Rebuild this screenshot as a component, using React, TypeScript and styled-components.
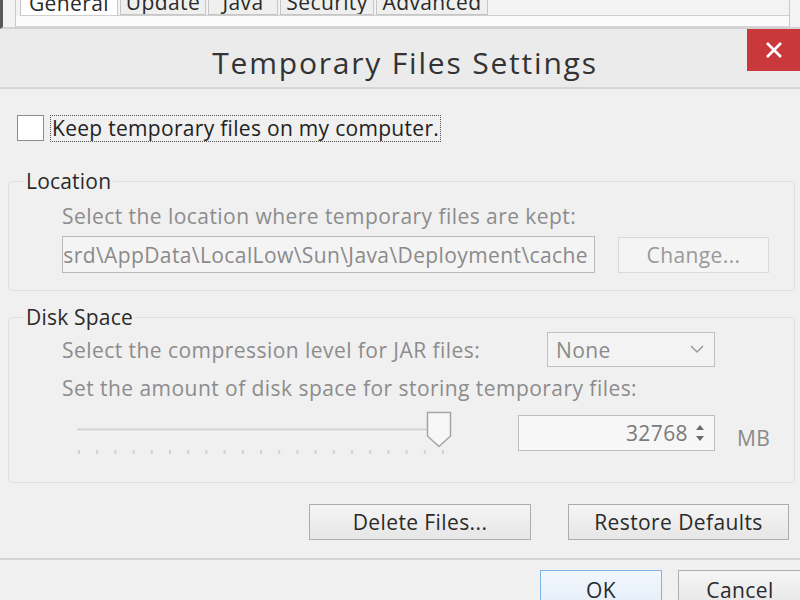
import React from "react";
import styled, { createGlobalStyle } from "styled-components";

const Global = createGlobalStyle`
  html, body { margin: 0; padding: 0; background: #f0f0f0; }
  body { font-family: "Open Sans", "Noto Sans", sans-serif; overflow: hidden; }
  * { box-sizing: border-box; }
`;

const Page = styled.div`
  width: 800px;
  height: 600px;
  display: flex;
  flex-direction: column;
  overflow: hidden;
  background: #f0f0f0;
  position: relative;
  & > * { flex-shrink: 0; }
`;

const ParentStrip = styled.div`
  height: 29px;
  background: #f3f3f3;
  display: flex;
  padding-left: 5px;
  border-left: 3px solid #5a5a5a;
  border-bottom: 2px solid #d2d2d2;
  overflow: hidden;
`;

const ParentPanel = styled.div`
  margin-left: 7px;
  width: 775px;
  height: 27px;
  border-left: 1px solid #c9c9c9;
  border-right: 1px solid #c9c9c9;
  display: flex;
  flex-direction: column;
`;

const Tabs = styled.div`
  display: flex;
  height: 16px;
  margin-left: 4px;
  align-items: flex-end;
  border-bottom: 1px solid #cfcfcf;
`;

const Tab = styled.div<{ $active?: boolean; $w: number }>`
  width: ${(p) => p.$w}px;
  height: ${(p) => (p.$active ? 17 : 16)}px;
  margin-right: 2px;
  background: ${(p) => (p.$active ? "#ffffff" : "#efefef")};
  border: 1px solid #c6c6c6;
  border-top: none;
  border-bottom: ${(p) => (p.$active ? "none" : "1px solid #c6c6c6")};
  font-size: 21px;
  line-height: 10px;
  color: #2a2a2a;
  display: flex;
  justify-content: center;
  align-items: flex-end;
  overflow: hidden;
  white-space: nowrap;
  letter-spacing: 0.4px;
`;

const TabText = styled.span`
  display: block;
  transform: translateY(-7px);
`;

const PanelBody = styled.div`
  flex: 1;
  background: #fbfbfb;
  border-bottom: 1px solid #d8d8d8;
`;

const TitleBar = styled.div`
  height: 60px;
  background: #ebebeb;
  border-bottom: 2px solid #d6d6d6;
  display: flex;
  align-items: center;
  justify-content: center;
  padding: 8px 0 0 10px;
  position: relative;
`;

const Title = styled.div`
  font-size: 30px;
  color: #333333;
  letter-spacing: 1.8px;
`;

const CloseButton = styled.div`
  position: absolute;
  top: 0;
  right: 0;
  width: 53px;
  height: 42px;
  background: #c9393c;
  display: flex;
  align-items: center;
  justify-content: center;
`;

const Content = styled.div`
  display: flex;
  flex-direction: column;
  padding: 26px 5px 0 8px;
  & > * { flex-shrink: 0; }
`;

const CheckRow = styled.div`
  display: flex;
  align-items: center;
  padding-left: 9px;
  height: 26px;
`;

const Box = styled.div`
  width: 27px;
  height: 26px;
  background: #ffffff;
  border: 1px solid #8d8d8d;
  margin-right: 7px;
`;

const FocusLabel = styled.span`
  font-size: 21px;
  color: #222;
  letter-spacing: 0.3px;
  padding: 0 1px;
  outline: 1px dotted #555;
  line-height: 25px;
`;

const Group = styled.fieldset<{ $height: number }>`
  margin: 0;
  padding: 0;
  border: 1px solid #e0e0e0;
  border-radius: 3px;
  height: ${(p) => p.$height}px;
  min-width: 0;
`;

const Legend = styled.legend`
  margin-left: 15px;
  padding: 0 2px;
  font-size: 21px;
  color: #2a2a2a;
  letter-spacing: 0.2px;
  line-height: 24px;
`;

const GroupBody = styled.div<{ $pt: number }>`
  display: flex;
  flex-direction: column;
  padding-left: 53px;
  padding-top: ${(p) => p.$pt}px;
`;

const Hint = styled.div<{ $w?: number; $mt?: number }>`
  font-size: 21px;
  color: #8c8c8c;
  letter-spacing: 0.45px;
  line-height: 26px;
  white-space: nowrap;
  width: ${(p) => (p.$w ? `${p.$w}px` : "auto")};
  margin-top: ${(p) => p.$mt ?? 0}px;
`;

const Row = styled.div<{ $gap?: number; $mt?: number; $align?: string }>`
  display: flex;
  align-items: ${(p) => p.$align ?? "center"};
  gap: ${(p) => p.$gap ?? 0}px;
  margin-top: ${(p) => p.$mt ?? 0}px;
`;

const PathField = styled.div`
  width: 533px;
  height: 37px;
  border: 1px solid #b9b9b9;
  background: #f4f4f4;
  font-size: 21px;
  color: #8a8a8a;
  letter-spacing: 0.4px;
  display: flex;
  align-items: center;
  justify-content: flex-end;
  padding-right: 6px;
  overflow: hidden;
  white-space: nowrap;
`;

const Button = styled.div<{ $w: number; $disabled?: boolean; $default?: boolean }>`
  width: ${(p) => p.$w}px;
  height: 36px;
  border: 1px solid ${(p) => (p.$default ? "#7eb4ea" : p.$disabled ? "#dadada" : "#adadad")};
  background: ${(p) =>
    p.$disabled ? "#f4f4f4" : p.$default ? "linear-gradient(#f2f7fc, #e3eef9)" : "linear-gradient(#f5f5f5, #e6e6e6)"};
  font-size: 21px;
  letter-spacing: 0.4px;
  color: ${(p) => (p.$disabled ? "#9a9a9a" : "#2a2a2a")};
  display: flex;
  align-items: center;
  justify-content: center;
  flex-shrink: 0;
`;

const Select = styled.div`
  width: 168px;
  height: 35px;
  border: 1px solid #c0c0c0;
  background: #f3f3f3;
  display: flex;
  align-items: center;
  justify-content: space-between;
  padding: 0 10px 0 8px;
  font-size: 21px;
  color: #8a8a8a;
  letter-spacing: 0.4px;
`;

const SliderBox = styled.div`
  margin-left: 12px;
  width: 444px;
  height: 46px;
`;

const Spinner = styled.div`
  width: 197px;
  height: 36px;
  margin-top: 4px;
  border: 1px solid #bdbdbd;
  background: #f7f7f7;
  display: flex;
  align-items: center;
  justify-content: flex-end;
  padding-right: 8px;
  gap: 6px;
  font-size: 21px;
  color: #7a7a7a;
  letter-spacing: 0.4px;
`;

const Unit = styled.span`
  font-size: 21px;
  color: #8a8a8a;
  margin-left: 22px;
  margin-top: 13px;
  letter-spacing: 0.3px;
`;

const Spacer = styled.div<{ $h: number }>`
  height: ${(p) => p.$h}px;
  flex-shrink: 0;
`;

const ActionRow = styled.div`
  display: flex;
  justify-content: flex-end;
  gap: 37px;
  padding-right: 6px;
  margin-top: 21px;
`;

const Separator = styled.div`
  height: 2px;
  background: #d4d4d4;
  margin-top: 18px;
`;

const FooterRow = styled.div`
  display: flex;
  justify-content: flex-end;
  gap: 16px;
  margin-top: 10px;
  margin-right: -2px;
`;

const FooterButton = styled(Button)`
  height: 40px;
`;

const Slider = () => {
  const ticks = [];
  for (let i = 0; i < 21; i++) {
    const x = 4 + i * 18.2;
    ticks.push(<rect key={i} x={x} y={39} width={2} height={4} fill="#d2d2d2" />);
  }
  return (
    <svg width="385" height="46" viewBox="0 0 385 46">
      <rect x="3" y="17" width="360" height="3" fill="#dcdcdc" />
      <rect x="3" y="20" width="360" height="1" fill="#f8f8f8" />
      {ticks}
      <path d="M353.5 1.5 H376.5 V25 L365 35.5 L353.5 25 Z" fill="#f7f7f7" stroke="#a4a4a4" strokeWidth="1.5" />
    </svg>
  );
};

export default function App() {
  return (
    <Page>
      <Global />
      <ParentStrip>
        <ParentPanel>
          <Tabs>
            <Tab $active $w={98}><TabText>General</TabText></Tab>
            <Tab $w={86}><TabText>Update</TabText></Tab>
            <Tab $w={70}><TabText>Java</TabText></Tab>
            <Tab $w={94}><TabText>Security</TabText></Tab>
            <Tab $w={112}><TabText>Advanced</TabText></Tab>
          </Tabs>
          <PanelBody />
        </ParentPanel>
      </ParentStrip>
      <TitleBar>
        <Title>Temporary Files Settings</Title>
        <CloseButton>
          <svg width="20" height="18" viewBox="0 0 20 18">
            <path d="M3 2 L17 16 M17 2 L3 16" stroke="#fff" strokeWidth="2.6" />
          </svg>
        </CloseButton>
      </TitleBar>
      <Content>
        <CheckRow>
          <Box />
          <FocusLabel>Keep temporary files on my computer.</FocusLabel>
        </CheckRow>
        <Spacer $h={28} />
        <Group $height={122}>
          <Legend>Location</Legend>
          <GroupBody $pt={10}>
            <Hint>Select the location where temporary files are kept:</Hint>
            <Row $gap={23} $mt={7}>
              <PathField>srd\AppData\LocalLow\Sun\Java\Deployment\cache</PathField>
              <Button $w={151} $disabled>Change...</Button>
            </Row>
          </GroupBody>
        </Group>
        <Spacer $h={14} />
        <Group $height={178}>
          <Legend>Disk Space</Legend>
          <GroupBody $pt={3}>
            <Row>
              <Hint $w={485}>Select the compression level for JAR files:</Hint>
              <Select>
                <span>None</span>
                <svg width="14" height="9" viewBox="0 0 14 9">
                  <path d="M1 1 L7 7 L13 1" fill="none" stroke="#9a9a9a" strokeWidth="1.5" />
                </svg>
              </Select>
            </Row>
            <Hint $mt={8}>Set the amount of disk space for storing temporary files:</Hint>
            <Row $mt={10} $align="flex-start">
              <SliderBox>
                <Slider />
              </SliderBox>
              <Spinner>
                <span>32768</span>
                <svg width="12" height="26" viewBox="0 0 12 26">
                  <path d="M2 10 L6 5 L10 10 Z" fill="#6a6a6a" />
                  <path d="M2 16 L6 21 L10 16 Z" fill="#6a6a6a" />
                </svg>
              </Spinner>
              <Unit>MB</Unit>
            </Row>
          </GroupBody>
        </Group>
        <ActionRow>
          <Button $w={222}>Delete Files...</Button>
          <Button $w={221}>Restore Defaults</Button>
        </ActionRow>
      </Content>
      <Separator />
      <FooterRow>
        <FooterButton $w={122} $default>OK</FooterButton>
        <FooterButton $w={124}>Cancel</FooterButton>
      </FooterRow>
    </Page>
  );
}
